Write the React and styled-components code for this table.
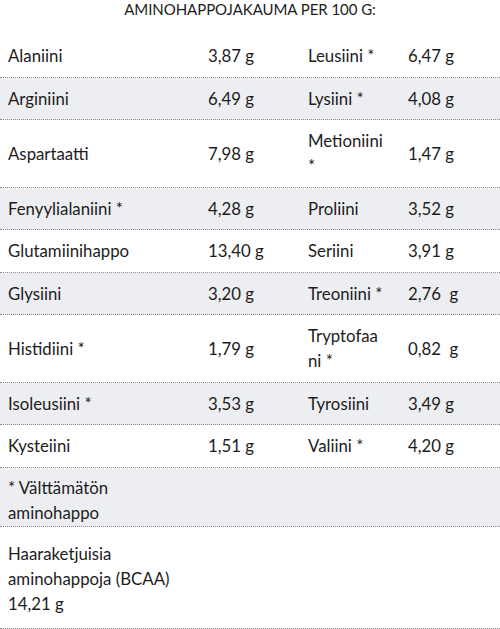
import React from "react";
import styled, { createGlobalStyle } from "styled-components";

const Global = createGlobalStyle`
  html, body { margin: 0; padding: 0; background: #fff; }
  body { font-family: "Lato", "Noto Sans", sans-serif; color: #1c1c1c; }
`;

const Page = styled.div`
  width: 500px;
  display: flex;
  flex-direction: column;
`;

const Title = styled.h2`
  margin: 0 0 17px;
  font-size: 15px;
  font-weight: 400;
  line-height: 18px;
  text-align: center;
  text-transform: uppercase;
  letter-spacing: -0.05px;
`;

const Row = styled.div`
  display: grid;
  grid-template-columns: 200px 100px 100px 100px;
  background: ${(p) => (p.$shade ? "#edeef2" : "#fff")};
  border-bottom: 1px dotted #8a8a8a;
`;

const Cell = styled.div`
  padding: ${(p) => p.$pad || "8.25px 8px"};
  font-size: 16.8px;
  line-height: 25px;
  display: flex;
  flex-direction: column;
  justify-content: center;
  white-space: pre;
`;

const data = [
  ["Alaniini", "3,87 g", "Leusiini *", "6,47 g"],
  ["Arginiini", "6,49 g", "Lysiini *", "4,08 g"],
  ["Aspartaatti", "7,98 g", "Metioniini\n*", "1,47 g"],
  ["Fenyylialaniini *", "4,28 g", "Proliini", "3,52 g"],
  ["Glutamiinihappo", "13,40 g", "Seriini", "3,91 g"],
  ["Glysiini", "3,20 g", "Treoniini *", "2,76  g"],
  ["Histidiini *", "1,79 g", "Tryptofaa\nni *", "0,82  g"],
  ["Isoleusiini *", "3,53 g", "Tyrosiini", "3,49 g"],
  ["Kysteiini", "1,51 g", "Valiini *", "4,20 g"],
];

export default function App() {
  return (
    <Page>
      <Global />
      <Title>Aminohappojakauma per 100 g:</Title>
      {data.map((r, i) => (
        <Row key={i} $shade={i % 2 === 1}>
          {r.map((c, j) => (
            <Cell key={j}>{c}</Cell>
          ))}
        </Row>
      ))}
      <Row $shade>
        <Cell $pad="7px 8px 1px">{"* Välttämätön\naminohappo"}</Cell>
      </Row>
      <Row>
        <Cell $pad="14px 8px 12px">{"Haaraketjuisia\naminohappoja (BCAA)\n14,21 g"}</Cell>
      </Row>
    </Page>
  );
}
